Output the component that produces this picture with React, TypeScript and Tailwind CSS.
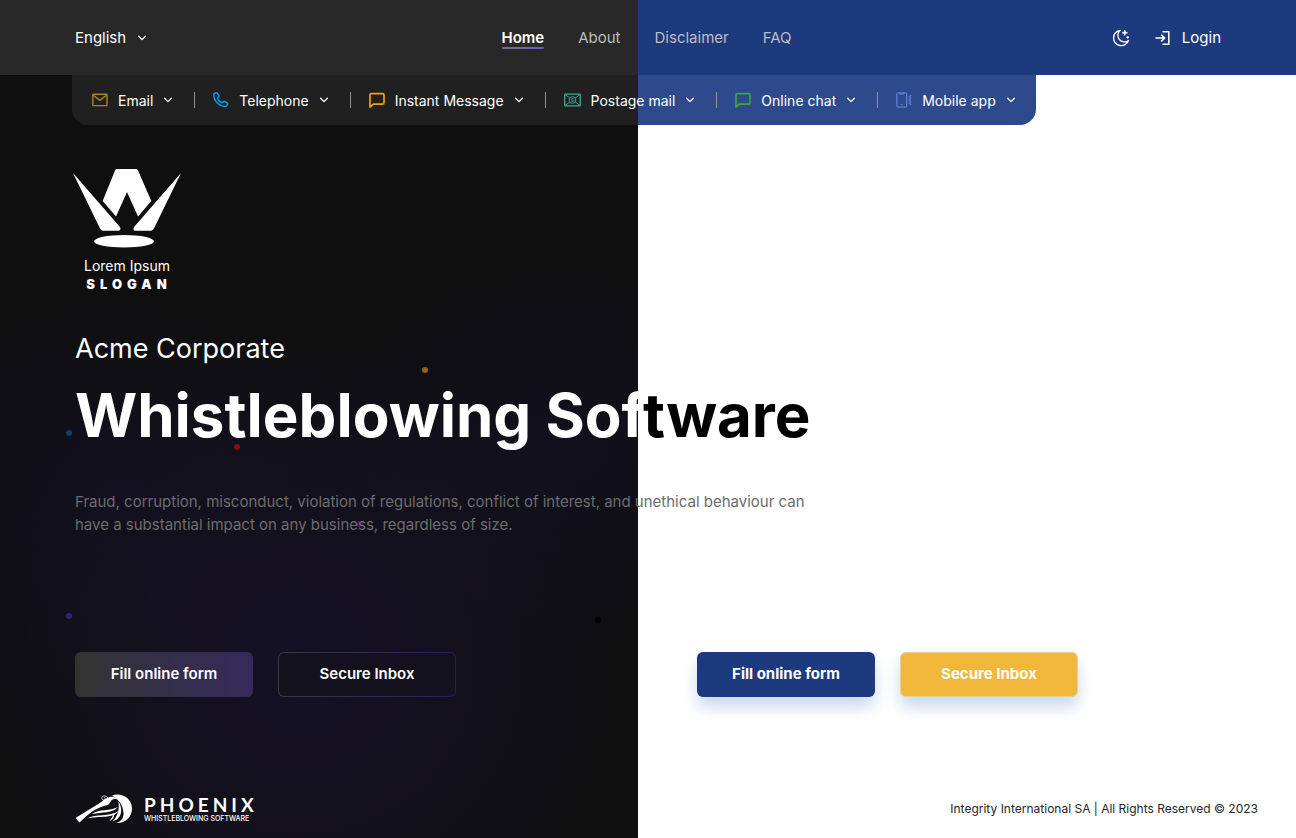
import type { ReactNode } from "react";

const Chevron = () => (
  <svg viewBox="0 0 10 10" className="size-[10px] shrink-0" fill="none" stroke="currentColor" strokeWidth="1.3" strokeLinecap="round" strokeLinejoin="round" aria-hidden="true">
    <path d="M1.600 3.300 5 6.600l3.400-3.300" />
  </svg>
);

const MailIcon = () => (
  <svg viewBox="0 0 16 16" className="size-4" fill="none" stroke="#a8841e" strokeWidth="1.400" strokeLinejoin="round" aria-hidden="true">
    <rect x=".8" y="2.200" width="14.200" height="11.400" rx=".6" />
    <path d="M1 3 7.900 8.400 14.800 3" />
  </svg>
);

const PhoneIcon = () => (
  <svg viewBox="0 0 16 16" className="size-4" fill="none" stroke="#0a97e4" strokeWidth="1.500" strokeLinejoin="round" strokeLinecap="round" aria-hidden="true">
    <path d="M1.600 1.400 3 .8c.5-.2 1-.1 1.300.3l1.500 2.400c.3.500.2 1-.1 1.300l-.9.9c-.3.300-.2.700 0 1.100.9 1.700 2.100 2.900 3.700 3.700.4.200.8.200 1.100-.1l.9-.8c.4-.3.900-.4 1.300-.1l2.500 1.500c.4.300.5.800.3 1.200-.6 1.500-1.700 2.400-3.200 2.300C6.100 13.900 1.100 9 .8 3.900.6 2.900.9 2 1.600 1.400Z" />
  </svg>
);

const ChatIcon = ({ color }: { color: string }) => (
  <svg viewBox="0 0 16 16" className="size-4" fill="none" stroke={color} strokeWidth="1.700" strokeLinejoin="round" aria-hidden="true">
    <path d="M2.300 1.600h11.300c.9 0 1.400.5 1.400 1.400v7.800c0 .9-.5 1.400-1.400 1.400H4.400L1 15V3c0-.9.400-1.400 1.300-1.400Z" />
  </svg>
);

const PostageIcon = () => (
  <svg viewBox="0 0 17 16" className="h-4 w-[17px]" fill="none" stroke="#41a695" strokeWidth="1" strokeLinejoin="round" aria-hidden="true">
    <rect x=".7" y="2.200" width="15.600" height="11.600" rx=".4" strokeWidth="1.300" />
    <path d="m1 2.500 4.700 3.400M16 2.500 11.300 5.900M1 13.500l4.700-3.400M16 13.500l-4.700-3.400" />
    <circle cx="8.500" cy="8" r="3.300" />
    <path d="M9.600 6.900c-.9-.6-2.100-.3-2 .4.1.9 2 .5 2 1.400 0 .7-1.300.9-2.100.3" />
  </svg>
);

const MobileIcon = () => (
  <svg viewBox="0 0 16 16" className="size-4" fill="none" stroke="#5c7fd4" strokeWidth="1.300" strokeLinecap="round" strokeLinejoin="round" aria-hidden="true">
    <rect x=".8" y=".9" width="9.800" height="14.200" rx="1.600" />
    <path d="M3.800 1.200c.1.800.4 1 1 1h1.800c.6 0 .9-.2 1-1M5.400 12.500h.6" />
    <path d="m14.800 3.600-1.400 1.300 1.200 1.500L13.200 8l1.400 1.600-1.200 1.500 1.400 1.300" strokeWidth="1.400" />
  </svg>
);

const MoonIcon = () => (
  <svg viewBox="0 0 18 18" className="size-[18px]" fill="none" stroke="currentColor" strokeWidth="1.300" strokeLinejoin="round" aria-hidden="true">
    <path d="M8.300 1.300a7.700 7.700 0 1 0 8.200 10.200A6.300 6.300 0 0 1 8.300 1.300Z" />
    <path d="m12.800 1 .8 2 2 .8-2 .8-.8 2-.8-2-2-.8 2-.8ZM15.800 7l.4.900.9.400-.9.400-.4.900-.4-.9-.9-.4.9-.4Z" fill="currentColor" strokeWidth=".6" />
  </svg>
);

const LoginIcon = () => (
  <svg viewBox="0 0 16 16" className="size-4" fill="none" stroke="currentColor" strokeWidth="1.500" aria-hidden="true">
    <path d="M7.500 1.700h6.300v12.600H7.500M.5 8h8.700M6.200 4.600 9.600 8l-3.400 3.400" />
  </svg>
);

const CrownLogo = () => (
  <svg viewBox="0 0 108 80" className="h-20 w-[108px]" fill="#fff" aria-hidden="true">
    <path d="M0 4 46.500 57.500c1.800 2.200 1 4.300-1.500 4.300H31.500c-2.400 0-3.700-.8-4.700-2.900Z" />
    <path d="M108 4 61.500 57.500c-1.800 2.200-1 4.300 1.500 4.300h13.500c2.400 0 3.700-.8 4.700-2.900Z" />
    <path d="M44.500 0h18c1.200 0 2 .4 2.500 1.500L78.300 32 65 47.500 54 23 43 47.500 29.700 32 42 1.500c.5-1.100 1.300-1.500 2.500-1.500Z" />
    <ellipse cx="51" cy="72.300" rx="30" ry="6.300" />
  </svg>
);

const PhoenixMark = () => (
  <svg viewBox="0 0 58 30" className="h-[30px] w-[58px]" fill="#fff" aria-hidden="true">
    <path d="M37 1.500C45-2 57 3 57 14.500 57 24 49 30 41 29c5-1 8-5.500 7.500-10C48 13 46 7 37 1.500Z" />
    <path d="M.5 24 24 9.500c3-2 5-4 8-5.500 5-2.500 9-1 10.500 1.500-2.500-1-5-.5-6.500 1.500-1 1.400-1.300 3-3.500 4C22 13 13 20 4.500 28.500Z" />
    <path d="M17 20c7-5.500 18-2.500 26-7-5 6.500-16 5-26 7ZM12 24.500c9-5 22-1.500 32-7.500-6 8-20 4.500-32 7.500Z" />
    <path d="M43.500 7.500c4.500 7 4 17-6 20 5-5 7-11 6-20ZM39 19.500c.5 3.500-1 6-4.500 7.500 2-2.300 3-4.500 4.500-7.500Z" />
    <path d="M34 5.500c-1-2.500-3.500-4-5.500-3.500-2.400.6-2 4 .4 4 1.700-.1 1.800-2.200.4-2.300" fill="none" stroke="#fff" strokeWidth=".8" />
  </svg>
);

const channels: { label: string; icon: ReactNode }[] = [
  { label: "Email", icon: <MailIcon /> },
  { label: "Telephone", icon: <PhoneIcon /> },
  { label: "Instant Message", icon: <ChatIcon color="#f59e12" /> },
  { label: "Postage mail", icon: <PostageIcon /> },
  { label: "Online chat", icon: <ChatIcon color="#41a72c" /> },
  { label: "Mobile app", icon: <MobileIcon /> },
];

const dots = [
  "left-[422px] top-[367px] bg-[#95620f]",
  "left-[66px] top-[430px] bg-[#0b416f]",
  "left-[234px] top-[444px] bg-[#8a0a10]",
  "left-[357px] top-[521px] bg-[#55125a]",
  "left-[66px] top-[613px] bg-[#33218a]",
  "left-[595px] top-[617px] bg-black",
];

const buttonBase = "h-[45px] w-[178px] rounded-md text-[15px] text-white";

export default function App() {
  return (
    <div className="relative isolate flex min-h-screen flex-col bg-white font-['Inter',sans-serif] text-white">
      <div aria-hidden="true" className="absolute inset-y-0 left-0 -z-10 w-[638px] bg-[#0f0f0f] bg-[radial-gradient(ellipse_330px_330px_at_300px_660px,#151124_20%,transparent),radial-gradient(ellipse_240px_200px_at_560px_450px,#12101d,transparent),radial-gradient(ellipse_220px_220px_at_110px_500px,#12101d,transparent)]">
        {dots.map((dot) => (
          <span key={dot} className={`absolute size-[6px] rounded-full ${dot}`} />
        ))}
      </div>

      <header className="grid h-[75px] grid-cols-[1fr_auto_1fr] items-center bg-[linear-gradient(to_right,#282828_638px,#1e3a7e_638px)] px-[75px] pt-px text-[15px]">
        <button type="button" className="flex items-center gap-[11px] justify-self-start">
          English <Chevron />
        </button>
        <nav className="flex items-center gap-[34px] pr-[3px] text-[#bdbdbd]">
          <a href="#home" className="relative font-semibold text-white">
            Home
            <span className="absolute inset-x-0 bottom-0 h-[2px] rounded-full bg-linear-to-r from-[#77727f] to-[#6f55cf]" />
          </a>
          <a href="#about">About</a>
          <a href="#disclaimer">Disclaimer</a>
          <a href="#faq">FAQ</a>
        </nav>
        <div className="flex items-center gap-[25px] justify-self-end">
          <button type="button" aria-label="Toggle theme"><MoonIcon /></button>
          <a href="#login" className="flex items-center gap-[11px]">
            <LoginIcon /> Login
          </a>
        </div>
      </header>

      <div className="ml-[72px] flex h-[50px] items-center self-start rounded-b-2xl bg-[linear-gradient(to_right,#202020_566px,#2e4a8c_566px)] px-5 text-[14px]">
        {channels.map(({ label, icon }, i) => (
          <div key={label} className="flex items-center">
            {i > 0 && <span className="mr-[18px] ml-[21px] h-4 w-px bg-[#8c919c]" />}
            <button type="button" className="flex items-center gap-[10px] whitespace-nowrap">
              {icon}
              {label}
              <Chevron />
            </button>
          </div>
        ))}
      </div>

      <main className="flex-1 px-[75px] pt-11">
        <div className="-ml-[2px] flex w-[108px] flex-col items-center text-center">
          <CrownLogo />
          <p className="mt-2 text-[14px] leading-[18px]">Lorem Ipsum</p>
          <p className="pl-1 text-[13px] leading-[18px] font-black tracking-[5px]">SLOGAN</p>
        </div>
        <p className="mt-9 text-[27px] leading-10">Acme Corporate</p>
        <h1 className="mt-2 text-[60px] leading-[76px] font-bold whitespace-nowrap">
          Whistleblowing Sof<span className="text-black">tware</span>
        </h1>
        <p className="mt-[37px] max-w-[740px] text-[15px] leading-[23px] text-[#6c6c6e]">
          Fraud, corruption, misconduct, violation of regulations, conflict of interest, and unethical behaviour can
          have a substantial impact on any business, regardless of size.
        </p>
        <div className="mt-[116px] flex">
          <div className="flex w-[622px] shrink-0 gap-[25px]">
            <button type="button" className={`${buttonBase} bg-linear-to-r from-[#333232] to-[#352a5c] font-semibold`}>
              Fill online form
            </button>
            <button type="button" className={`${buttonBase} border border-transparent [background:linear-gradient(#14101f,#14121f)_padding-box,linear-gradient(to_right,#3a3a3c,#2a1c63)_border-box] font-semibold`}>
              Secure Inbox
            </button>
          </div>
          <div className="flex gap-[25px]">
            <button type="button" className={`${buttonBase} bg-[#1e3a7e] font-bold shadow-[0_10px_16px_#c8daec]`}>
              Fill online form
            </button>
            <button type="button" className={`${buttonBase} border border-[#e8cf9a] bg-[#f1b73b] font-bold shadow-[0_10px_16px_#c8daec]`}>
              Secure Inbox
            </button>
          </div>
        </div>
      </main>

      <footer className="flex items-center justify-between pr-[38px] pb-[14px] pl-[75px]">
        <div className="flex items-center gap-[11px]">
          <PhoenixMark />
          <div>
            <p className="font-[Lato,sans-serif] text-[19px] leading-5 font-bold tracking-[4px]">PHOENIX</p>
            <p className="text-[7px] leading-[8px] font-medium">WHISTLEBLOWING SOFTWARE</p>
          </div>
        </div>
        <p className="text-[12px] text-[#262626]">Integrity International SA | All Rights Reserved © 2023</p>
      </footer>
    </div>
  );
}
